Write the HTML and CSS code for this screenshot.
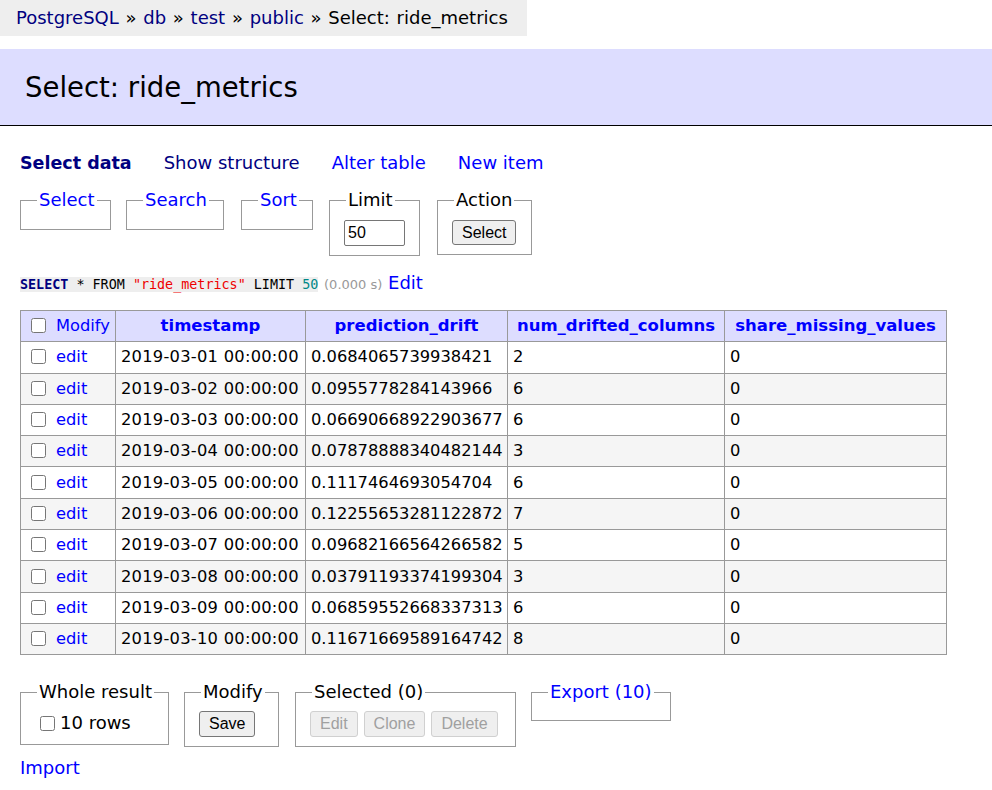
FILE: index.html
```html
<!DOCTYPE html>
<html>
<head>
<meta charset="utf-8">
<title>Select: ride_metrics</title>
<link rel="stylesheet" href="styles.css">
</head>
<body>
<p class="breadcrumb"><a class="visited" href="#">PostgreSQL</a> » <a class="visited" href="#">db</a> » <a class="visited" href="#">test</a> » <a class="visited" href="#">public</a> » Select: ride_metrics</p>
<h2 class="title">Select: ride_metrics</h2>
<div class="content">
  <p class="links">
    <a class="visited current" href="#">Select data</a>
    <a class="visited" href="#">Show structure</a>
    <a href="#">Alter table</a>
    <a href="#">New item</a>
  </p>
  <form class="filters">
    <fieldset class="fs fs-empty fs-select"><legend><a href="#">Select</a></legend></fieldset>
    <fieldset class="fs fs-empty fs-search"><legend><a href="#">Search</a></legend></fieldset>
    <fieldset class="fs fs-empty fs-sort"><legend><a href="#">Sort</a></legend></fieldset>
    <fieldset class="fs fs-limit"><legend>Limit</legend><input class="limit-input" type="text" value="50"></fieldset>
    <fieldset class="fs fs-action"><legend>Action</legend><button class="btn" type="button">Select</button></fieldset>
  </form>
  <p class="sql"><code class="code"><span class="kw">SELECT</span> * FROM <span class="str">"ride_metrics"</span> LIMIT <span class="num">50</span></code> <span class="time">(0.000 s)</span> <a class="sql-edit" href="#">Edit</a></p>
  <table class="data">
    <colgroup><col class="c1"><col class="c2"><col class="c3"><col class="c4"><col class="c5"></colgroup>
    <thead>
      <tr><td class="mod-head"><input class="cb" type="checkbox"><a href="#">Modify</a></td><th><a href="#">timestamp</a></th><th><a href="#">prediction_drift</a></th><th><a href="#">num_drifted_columns</a></th><th><a href="#">share_missing_values</a></th></tr>
    </thead>
    <tbody>
      <tr><td><input class="cb" type="checkbox"><a href="#">edit</a></td><td class="ts">2019-03-01 00:00:00</td><td>0.0684065739938421</td><td>2</td><td>0</td></tr>
      <tr class="odd"><td><input class="cb" type="checkbox"><a href="#">edit</a></td><td class="ts">2019-03-02 00:00:00</td><td>0.0955778284143966</td><td>6</td><td>0</td></tr>
      <tr><td><input class="cb" type="checkbox"><a href="#">edit</a></td><td class="ts">2019-03-03 00:00:00</td><td>0.06690668922903677</td><td>6</td><td>0</td></tr>
      <tr class="odd"><td><input class="cb" type="checkbox"><a href="#">edit</a></td><td class="ts">2019-03-04 00:00:00</td><td>0.07878888340482144</td><td>3</td><td>0</td></tr>
      <tr><td><input class="cb" type="checkbox"><a href="#">edit</a></td><td class="ts">2019-03-05 00:00:00</td><td>0.1117464693054704</td><td>6</td><td>0</td></tr>
      <tr class="odd"><td><input class="cb" type="checkbox"><a href="#">edit</a></td><td class="ts">2019-03-06 00:00:00</td><td>0.12255653281122872</td><td>7</td><td>0</td></tr>
      <tr><td><input class="cb" type="checkbox"><a href="#">edit</a></td><td class="ts">2019-03-07 00:00:00</td><td>0.09682166564266582</td><td>5</td><td>0</td></tr>
      <tr class="odd"><td><input class="cb" type="checkbox"><a href="#">edit</a></td><td class="ts">2019-03-08 00:00:00</td><td>0.03791193374199304</td><td>3</td><td>0</td></tr>
      <tr><td><input class="cb" type="checkbox"><a href="#">edit</a></td><td class="ts">2019-03-09 00:00:00</td><td>0.06859552668337313</td><td>6</td><td>0</td></tr>
      <tr class="odd"><td><input class="cb" type="checkbox"><a href="#">edit</a></td><td class="ts">2019-03-10 00:00:00</td><td>0.11671669589164742</td><td>8</td><td>0</td></tr>
    </tbody>
  </table>
  <div class="actions">
    <fieldset class="fs fs-whole"><legend>Whole result</legend><label class="rows"><input class="cb" type="checkbox">10 rows</label></fieldset>
    <fieldset class="fs fs-modify"><legend>Modify</legend><button class="btn" type="button">Save</button></fieldset>
    <fieldset class="fs fs-selected"><legend>Selected (0)</legend><div class="btns"><button class="btn" type="button" disabled>Edit</button><button class="btn" type="button" disabled>Clone</button><button class="btn" type="button" disabled>Delete</button></div></fieldset>
    <fieldset class="fs fs-empty fs-export"><legend><a href="#">Export (10)</a></legend></fieldset>
  </div>
  <p class="import"><a href="#">Import</a></p>
</div>
</body>
</html>
```
FILE: styles.css
```css
html, body {
  margin: 0;
  padding: 0;
  background: #fff;
}
body {
  font-family: "DejaVu Sans", Verdana, sans-serif;
  font-size: 18px;
  line-height: 20px;
  color: #000;
}
a {
  color: #0000ff;
  text-decoration: none;
}
a.visited {
  color: #000080;
}
.breadcrumb {
  display: inline-block;
  margin: 0;
  height: 36px;
  line-height: 36px;
  padding: 0 19px 0 16px;
  background: #eee;
  white-space: nowrap;
  word-spacing: 1px;
}
.title {
  margin: 13px 0 0;
  height: 76px;
  line-height: 76px;
  padding: 0 0 0 25px;
  background: #ddf;
  border-bottom: 1px solid #000;
  font-size: 27.5px;
  font-weight: normal;
}
.content {
  padding: 0 20px;
}
.links {
  margin: 27px 0 0;
  display: flex;
  gap: 32px;
}
.links .current {
  font-weight: bold;
  font-size: 17.5px;
}
.filters, .actions {
  display: flex;
  align-items: flex-start;
  margin: 0;
}
.filters {
  margin-top: 17px;
}
.fs {
  margin: 0;
  border: 1px solid #999;
  padding: 9px 14px 9px;
  min-width: 0;
}
.fs legend {
  padding: 0 2px;
  margin-left: 2px;
}
.fs-empty { height: 20px; }
.fs-select { width: 61px; }
.fs-search { width: 68px; margin-left: 15px; }
.fs-sort { width: 42px; margin-left: 17px; }
.fs-limit { width: 61px; padding-top: 10px; margin-left: 16px; }
.fs-action { width: 65px; padding-top: 10px; margin-left: 17px; }
.limit-input {
  box-sizing: border-box;
  width: 61px;
  height: 26px;
  margin: 0;
  padding: 1px 3px;
  border: 1px solid #767676;
  border-radius: 2px;
  font: 16px "Liberation Sans", Arial, sans-serif;
}
.btn {
  box-sizing: border-box;
  height: 25px;
  padding: 0 9px;
  border: 1px solid #767676;
  border-radius: 3px;
  background: #efefef;
  color: #000;
  font: 16px "Liberation Sans", Arial, sans-serif;
}
.btn:disabled {
  color: #a0a0a0;
  border-color: #d0d0d0;
  background: #efefef;
}
.sql {
  margin: 17px 0 0;
  line-height: 20px;
}
.code {
  font-family: "DejaVu Sans Mono", monospace;
  font-size: 13.4px;
  background: #eee;
}
.kw {
  color: #000080;
  font-weight: bold;
}
.str {
  color: #e00;
}
.num {
  color: #088;
}
.time {
  color: #999;
  font-size: 13px;
}
.data {
  margin-top: 15px;
  border-collapse: collapse;
  table-layout: fixed;
  width: 927px;
  border: 1px solid #999;
  font-size: 16.3px;
}
.c1 { width: 95px; }
.c2 { width: 190px; }
.c3 { width: 202px; }
.c4 { width: 217px; }
.c5 { width: 222px; }
.data td, .data th {
  border: 1px solid #999;
  padding: 5px 5px;
  height: 20.3px;
  line-height: 20px;
  white-space: nowrap;
  overflow: hidden;
  text-align: left;
}
.data td.ts {
  letter-spacing: 0.26px;
}
.data thead td, .data thead th {
  background: #ddf;
}
.data th {
  text-align: center;
  font-weight: bold;
  font-size: 16.5px;
}
.data tr.odd td {
  background: #f5f5f5;
}
.cb {
  width: 15px;
  height: 15px;
  margin: 0 10px 0 5px;
  vertical-align: -2px;
}
.actions {
  margin-top: 27px;
}
.fs-whole { width: 119px; }
.fs-modify { width: 65px; margin-left: 15px; }
.fs-selected { width: 191px; margin-left: 16px; }
.fs-export { width: 110px; height: 19px; margin-left: 15px; }
.rows {
  display: block;
  line-height: 24px;
}
.rows .cb {
  margin: 0 5px 0 5px;
}
.fs-modify .btn, .fs-selected .btn {
  height: 26px;
}
.btns {
  display: flex;
  gap: 6px;
}
.import {
  margin: 11px 0 0;
}
```
